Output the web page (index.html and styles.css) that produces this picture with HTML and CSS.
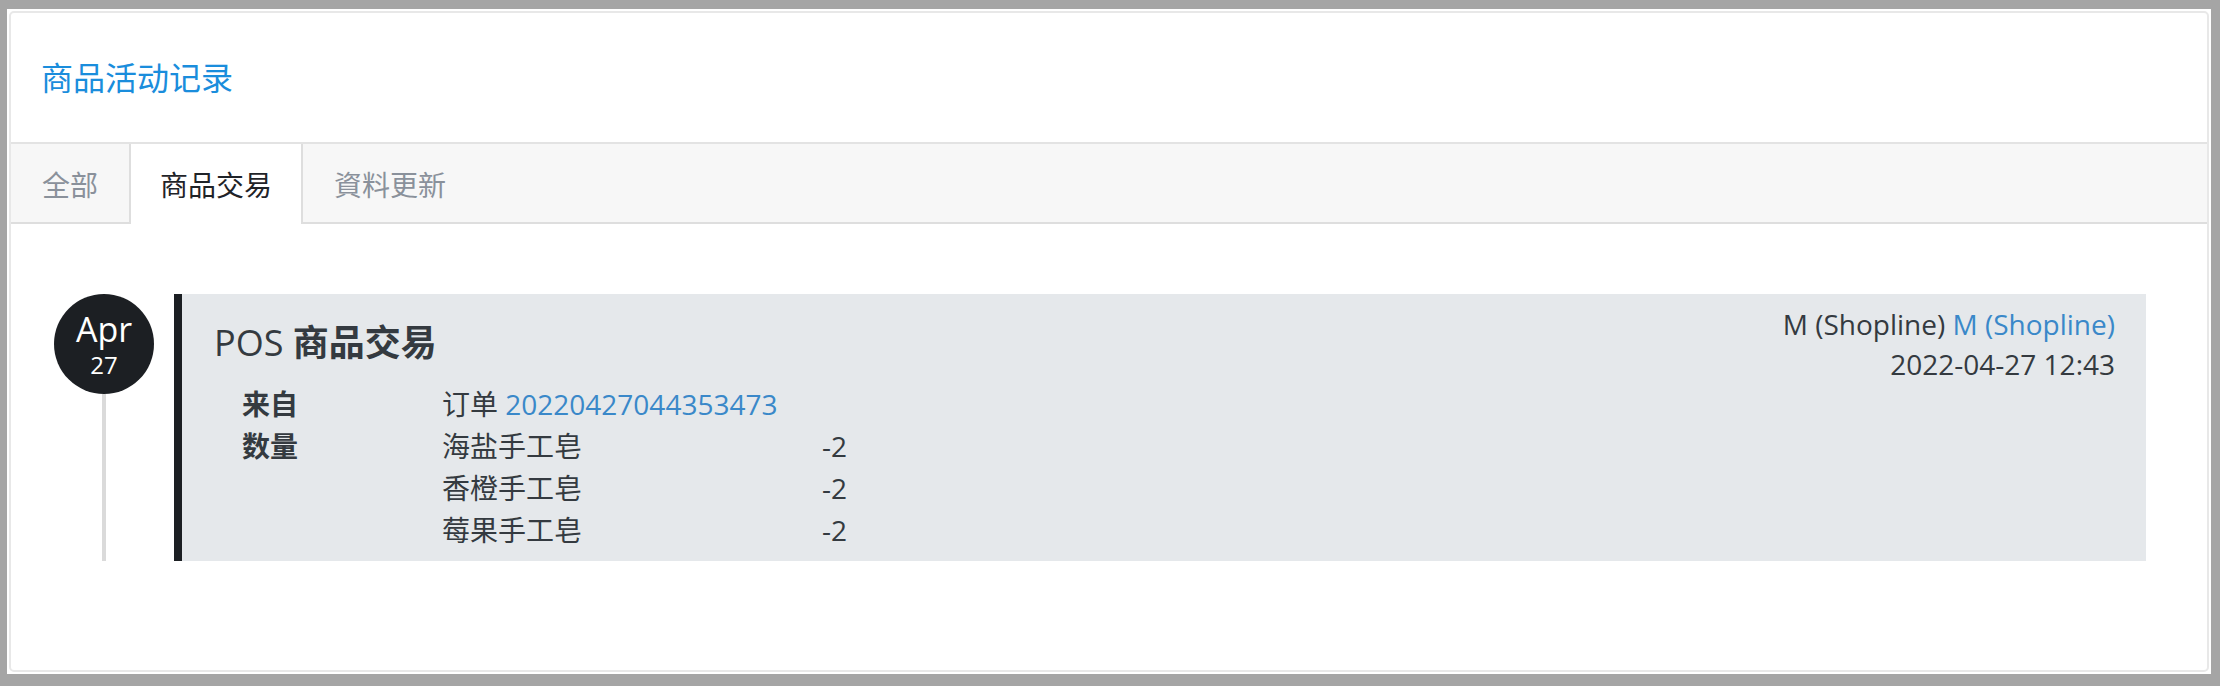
FILE: index.html
```html
<!DOCTYPE html>
<html lang="zh-CN">
<head>
  <meta charset="UTF-8">
  <title>商品活动记录</title>
  <meta name="viewport" content="width=device-width, initial-scale=1.0">
  <link rel="stylesheet" href="styles.css">
</head>
<body>
  <div class="frame">
    <div class="panel">
      <div class="panel-heading">
        <h2 class="panel-title">商品活动记录</h2>
      </div>

      <ul class="tabs">
        <li class="tab">全部</li>
        <li class="tab active">商品交易</li>
        <li class="tab">資料更新</li>
      </ul>

      <div class="timeline">
        <div class="tl-item">
          <div class="tl-date">
            <div class="tl-circle">
              <span class="tl-month">Apr</span>
              <span class="tl-day">27</span>
            </div>
            <div class="tl-line"></div>
          </div>

          <div class="tl-card">
            <div class="tl-main">
              <h3 class="tl-title">POS <b>商品交易</b></h3>
              <div class="fields">
                <div class="field-label">来自</div>
                <div class="field-value">订单 <a href="#">20220427044353473</a></div>

                <div class="field-label">数量</div>
                <div class="field-value">
                  <div class="qty-row"><span>海盐手工皂</span><span>-2</span></div>
                  <div class="qty-row"><span>香橙手工皂</span><span>-2</span></div>
                  <div class="qty-row"><span>莓果手工皂</span><span>-2</span></div>
                </div>
              </div>
            </div>

            <div class="tl-meta">
              <div>M (Shopline) <a href="#">M (Shopline)</a></div>
              <div>2022-04-27 12:43</div>
            </div>
          </div>
        </div>
      </div>
    </div>
  </div>
</body>
</html>
```

FILE: styles.css
```css
body {
  margin: 0;
  padding: 9px 9px 11px 7px;
  background: #a5a5a5;
  font-family: "Open Sans", "Noto Sans CJK SC", sans-serif;
  font-size: 28px;
  line-height: 40px;
  color: #343a40;
}

a {
  color: #3a88c9;
  text-decoration: none;
}

.frame {
  background: #fff;
  padding: 2px;
}

.panel {
  border: 2px solid #e8e8e8;
  border-radius: 5px;
  background: #fff;
}

/* titre */
.panel-heading {
  height: 129px;
  padding: 0 30px;
  display: flex;
  align-items: center;
  border-bottom: 2px solid #e3e3e3;
}

.panel-title {
  margin: 0;
  font-size: 32px;
  line-height: 35px;
  font-weight: normal;
  color: #1a8ddc;
}

/* onglets */
.tabs {
  list-style: none;
  margin: 0;
  padding: 0;
  display: flex;
  background: #f7f7f7;
  border-bottom: 2px solid #dedede;
  height: 78px;
}

.tab {
  padding: 21px 29px 19px;
  margin-bottom: -2px;
  border-left: 2px solid transparent;
  border-right: 2px solid transparent;
  color: #8a919b;
}

.tab.active {
  background: #fff;
  border-color: #dedede;
  color: #1f2328;
}

/* timeline */
.timeline {
  padding: 70px 61px 109px 43px;
}

.tl-item {
  display: flex;
  gap: 20px;
}

.tl-date {
  width: 100px;
  display: flex;
  flex-direction: column;
  align-items: center;
}

.tl-circle {
  width: 100px;
  height: 100px;
  border-radius: 50%;
  background: #1c1f23;
  color: #fff;
  display: flex;
  flex-direction: column;
  align-items: center;
  justify-content: center;
  gap: 7px;
}

.tl-month {
  font-size: 34px;
  line-height: 34px;
}

.tl-day {
  font-size: 24px;
  line-height: 24px;
}

.tl-line {
  flex: 1;
  width: 4px;
  background: #dadada;
}

.tl-card {
  flex: 1;
  display: flex;
  justify-content: space-between;
  background: #e5e8eb;
  border-left: 8px solid #1c1f23;
  padding: 10px 31px 10px 32px;
}

.tl-title {
  margin: 19px 0 20px;
  font-size: 36px;
  line-height: 39.6px;
  font-weight: normal;
}

.tl-title b {
  font-weight: bold;
}

.fields {
  display: grid;
  grid-template-columns: 200px auto;
  padding-left: 28px;
  line-height: 42px;
}

.field-label {
  font-weight: bold;
}

.qty-row {
  display: grid;
  grid-template-columns: 380px auto;
}

.tl-meta {
  text-align: right;
}
```
